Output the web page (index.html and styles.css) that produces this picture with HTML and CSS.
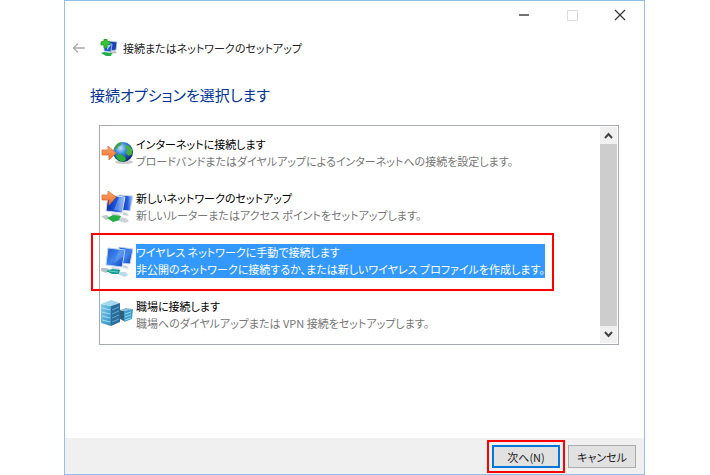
FILE: index.html
```html
<!DOCTYPE html>
<html lang="ja">
<head>
<meta charset="UTF-8">
<meta name="viewport" content="width=device-width, initial-scale=1.0">
<title>接続またはネットワークのセットアップ</title>
<link rel="stylesheet" href="styles.css">
</head>
<body>
  <div class="window">
    <div class="window-controls">
      <button type="button" aria-label="最小化">
        <svg width="12" height="12" viewBox="0 0 12 12"><path d="M1 6h10" stroke="#444" stroke-width="1.5"/></svg>
      </button>
      <button type="button" aria-label="最大化" disabled>
        <svg width="12" height="12" viewBox="0 0 12 12"><rect x="1.5" y="1.5" width="10" height="10" fill="none" stroke="#ddd"/></svg>
      </button>
      <button type="button" aria-label="閉じる">
        <svg width="12" height="12" viewBox="0 0 12 12"><path d="M1 1l10 10M11 1L1 11" stroke="#333" stroke-width="1.2"/></svg>
      </button>
    </div>

    <header class="wizard-header">
      <button type="button" class="back" aria-label="戻る" disabled>
        <svg width="14" height="12" viewBox="0 0 14 12"><path d="M13 6H1.5M6 1.5L1.5 6 6 10.5" fill="none" stroke="#aaa" stroke-width="1.3"/></svg>
      </button>
      <svg width="18" height="18" viewBox="0 0 18 18">
        <path d="M9 2l8 1-1 8-6 1z" fill="#1c3fb8" stroke="#b9c9dc" stroke-width=".8"/>
        <path d="M4 4l8 1-1 8-7-1z" fill="#2458d6" stroke="#c4d2e2" stroke-width=".8"/>
        <path d="M7 5l4 1-4 5z" fill="#a4cef8"/>
        <path d="M10 13l5-1 2 2-6 1z" fill="#b8bfc6"/>
        <path d="M1 14l3-1 8 1-1 3H6z" fill="#1fae48"/>
        <path d="M4 0h3v2l3 1v2L7 6v3H4V6L1 6V3l3-1z" fill="#35c833" stroke="#168a20" stroke-width=".7"/>
      </svg>
      <h1>接続またはネットワークのセットアップ</h1>
    </header>

    <main>
      <h2>接続オプションを選択します</h2>
      <div class="list">
        <div class="options" role="listbox" aria-label="接続オプション">
          <button type="button" class="option" role="option" aria-selected="false">
            <svg width="32" height="32" viewBox="0 0 32 32">
              <defs>
                <radialGradient id="sea" cx=".38" cy=".3" r=".7"><stop offset="0" stop-color="#c4e6fc"/><stop offset=".4" stop-color="#3f8fe0"/><stop offset="1" stop-color="#08246f"/></radialGradient>
                <linearGradient id="arrow" x2="0" y2="1"><stop offset="0" stop-color="#ffa869"/><stop offset="1" stop-color="#ee6c2a"/></linearGradient>
                <linearGradient id="screen"><stop offset="0" stop-color="#0a2fb0"/><stop offset=".6" stop-color="#2259dd"/><stop offset="1" stop-color="#a7cbf8"/></linearGradient>
                <linearGradient id="screenLight" x2="1" y2="1"><stop offset="0" stop-color="#1c55d0"/><stop offset=".5" stop-color="#3f86ee"/><stop offset="1" stop-color="#0c3cc0"/></linearGradient>
                <linearGradient id="tower" x2="1" y2="1"><stop offset="0" stop-color="#7fcdf0"/><stop offset="1" stop-color="#2f8cc0"/></linearGradient>
              </defs>
              <ellipse cx="23" cy="25" rx="9" ry="2" fill="#ccc"/>
              <circle cx="22" cy="15" r="10" fill="url(#sea)"/>
              <path d="M14 10l3-4 4-1-1 3-3 2-3 4z" fill="#3fa24a"/>
              <path d="M24 9l3-1 4 4v5l-3 2-3-3 1-3z" fill="#48b33a"/>
              <path d="M15 18l4-1 5 3 1 3-4 2-5-3z" fill="#2fae35"/>
              <path d="M1 13h6V9l8 7-7 7v-5H1z" fill="url(#arrow)" stroke="#e0703a" stroke-width=".8"/>
            </svg>
            <span class="option-text">
              <span class="option-title">インターネットに接続します</span>
              <span class="option-note">ブロードバンドまたはダイヤルアップによるインターネットへの接続を設定します。</span>
            </span>
          </button>

          <button type="button" class="option" role="option" aria-selected="false">
            <svg width="32" height="32" viewBox="0 0 32 32">
              <path d="M18 4l14 1-3 15-10-1z" fill="url(#screen)" stroke="#cfdae8"/>
              <path d="M7 4l17 2-3 16-16-2z" fill="url(#screen)" stroke="#d3dde9"/>
              <path d="M18 6l5 1-3 13-7-1z" fill="#9fc5f7" opacity=".45"/>
              <path d="M10 22l8 1 2 3-8-1zM22 21l4 1 2 3-6-1z" fill="#ccd0d4"/>
              <path d="M0 25l6-1 3 3-4 2z" fill="#c1c7ca"/>
              <path d="M6 27l6-3 8 1-1 4-7 2z" fill="#25b045"/>
              <path d="M19 26l6 1 3 3-4 2-6-2z" fill="#cdd2d5"/>
              <path d="M1 4h6V0l8 6-7 8V9H1z" fill="url(#arrow)" stroke="#e0703a" stroke-width=".8"/>
            </svg>
            <span class="option-text">
              <span class="option-title">新しいネットワークのセットアップ</span>
              <span class="option-note">新しいルーターまたはアクセス ポイントをセットアップします。</span>
            </span>
          </button>

          <button type="button" class="option selected marked" role="option" aria-selected="true">
            <svg width="32" height="32" viewBox="0 0 32 32">
              <path d="M18 2l14 2-3 15-10-1z" fill="url(#screenLight)" stroke="#bcd3ee"/>
              <path d="M7 3l17 2-3 17-16-2z" fill="url(#screenLight)" stroke="#bcd3ee"/>
              <path d="M18 5l5 1-1 6-9 6z" fill="#8fbcf7" opacity=".35"/>
              <path d="M10 22l8 1 2 3-8-1zM22 20l4 1 2 3-6-1z" fill="#ccd6df"/>
              <path d="M0 23l6 0 3 2-4 3-5-2z" fill="#b5c6cb"/>
              <path d="M5 26l6-2 8 1-1 4-7 0z" fill="#149e93"/>
              <path d="M8 26l9 1" stroke="#6fd6c5"/>
              <path d="M19 27l6 0 2 3-3 2-6-2z" fill="#bcdcea"/>
            </svg>
            <span class="option-text">
              <span class="option-title">ワイヤレス ネットワークに手動で接続します</span>
              <span class="option-note">非公開のネットワークに接続するか、または新しいワイヤレス プロファイルを作成します。</span>
            </span>
          </button>

          <button type="button" class="option" role="option" aria-selected="false">
            <svg width="32" height="32" viewBox="0 0 32 32">
              <path d="M0 5l10 2v20L0 24z" fill="url(#tower)"/>
              <path d="M0 5l10-4 9 3-9 3z" fill="#a3d8ee"/>
              <path d="M10 7l9-3v19l-9 4z" fill="#2a6f9c"/>
              <path d="M1 9l8 2M1 13l8 2M1 17l8 2M1 21l8 2" stroke="#b8e8fa" stroke-width=".8"/>
              <path d="M11 11l7-3M11 15l7-3M11 19l7-3M11 23l7-3" stroke="#6db4d8" stroke-width=".8"/>
              <path d="M19 11l4 1v10l-4-2z" fill="#325f7c"/>
              <path d="M19 11l6-2 7 1-9 2z" fill="#8fb9cc"/>
              <path d="M23 12l9-2-1 10-8 3z" fill="#3f9fcf"/>
              <path d="M24 15l6-2M24 18l6-2M24 21l6-2" stroke="#a5e2f3" stroke-width=".8"/>
            </svg>
            <span class="option-text">
              <span class="option-title">職場に接続します</span>
              <span class="option-note">職場へのダイヤルアップまたは VPN 接続をセットアップします。</span>
            </span>
          </button>
        </div>
        <div class="scrollbar">
          <button type="button" aria-label="上へスクロール">
            <svg width="9" height="7" viewBox="0 0 9 7"><path d="M1 6l3.5-4L8 6" fill="none" stroke="#444" stroke-width="2"/></svg>
          </button>
          <div class="thumb"></div>
          <button type="button" aria-label="下へスクロール">
            <svg width="9" height="7" viewBox="0 0 9 7"><path d="M1 1l3.5 4L8 1" fill="none" stroke="#444" stroke-width="2"/></svg>
          </button>
        </div>
      </div>
    </main>

    <footer>
      <button type="button" class="btn primary marked">次へ(N)</button>
      <button type="button" class="btn">キャンセル</button>
    </footer>
  </div>
</body>
</html>
```

FILE: styles.css
```css
* {
  box-sizing: border-box;
}
body {
  margin: 0;
  background-color: #fff;
  font-family: "Noto Sans CJK JP", sans-serif;
  font-size: 11px;
  font-feature-settings: "palt";
  color: #222;
}
button {
  margin: 0;
  padding: 0;
  border: none;
  background: none;
  color: inherit;
  font: inherit;
  font-feature-settings: inherit;
}
svg {
  display: block;
  flex-shrink: 0;
}
.window {
  display: flex;
  flex-direction: column;
  min-height: 100vh;
  margin: 0 65px 0 64px;
  border: 1px solid #8fc0ec;
}
.window-controls {
  display: flex;
  justify-content: flex-end;
}
.window-controls button {
  display: flex;
  align-items: center;
  justify-content: center;
  width: 48px;
  height: 28px;
}
.wizard-header {
  display: flex;
  align-items: center;
  height: 38px;
  padding: 0 7px;
}
.back {
  margin-right: 14px;
}
h1 {
  margin: 0 0 0 5px;
  font-size: 11px;
  font-weight: 400;
}
main {
  flex: 1;
  padding: 16px 25px 0;
}
h2 {
  margin: 0;
  color: #003399;
  font-size: 15px;
  line-height: 24px;
  font-weight: 400;
}
.list {
  display: flex;
  margin: 18px 0 0 9px;
  border: 1px solid #a5a9b0;
  padding: 1px 1px 1px 0;
}
.options {
  display: flex;
  flex: 1;
  flex-direction: column;
  align-items: flex-start;
  gap: 20px;
  padding: 9px 0 11px 1px;
}
.option {
  position: relative;
  display: flex;
  align-items: center;
  gap: 3px;
  text-align: left;
  white-space: nowrap;
}
.option-text {
  display: flex;
  flex-direction: column;
}
.option-title,
.option-note {
  line-height: 17px;
}
.option-title {
  color: #000;
}
.option-note {
  color: #777;
}
.selected .option-text {
  background-color: #3399ff;
}
.selected .option-title,
.selected .option-note {
  color: #fff;
}
.scrollbar {
  display: flex;
  flex-direction: column;
  width: 17px;
  background-color: #f0f0f0;
}
.scrollbar button {
  display: flex;
  align-items: center;
  justify-content: center;
  height: 17px;
}
.thumb {
  flex: 1;
  background-color: #cdcdcd;
}
footer {
  display: flex;
  justify-content: flex-end;
  gap: 8px;
  padding: 7px 8px 6px;
  background-color: #f0f0f0;
}
.btn {
  width: 68px;
  height: 23px;
  border: 1px solid #adadad;
  background-color: #e1e1e1;
}
.primary {
  position: relative;
  border: 2px solid #0078d7;
}

/* red call-out frames */
.marked::after {
  content: "";
  position: absolute;
  border: 2px solid #ff0000;
}
.option.marked::after {
  inset: -11px -9px -13px -10px;
}
.btn.marked::after {
  inset: -7px;
}
```
